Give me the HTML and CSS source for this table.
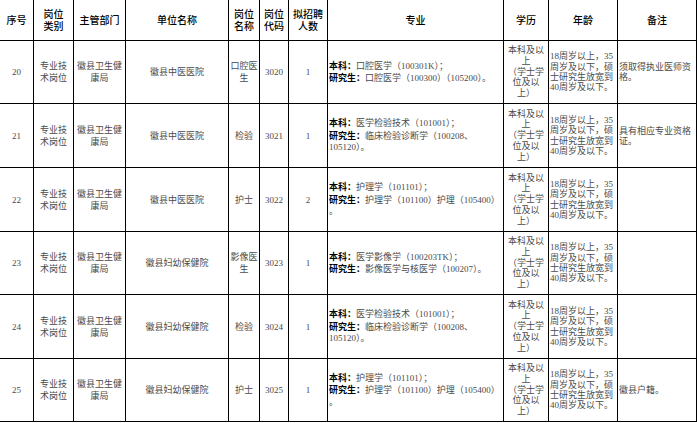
FILE: index.html
```html
<!DOCTYPE html>
<html lang="zh">
<head>
<meta charset="utf-8">
<title>岗位表</title>
<link rel="stylesheet" href="styles.css">
</head>
<body>
<table class="grid">
  <colgroup>
    <col class="w-no"><col class="w-type"><col class="w-dept"><col class="w-unit"><col class="w-post"><col class="w-code"><col class="w-num"><col class="w-major"><col class="w-edu"><col class="w-age"><col class="w-note">
  </colgroup>
  <tr class="head">
    <th>序号</th><th>岗位<br>类别</th><th>主管部门</th><th>单位名称</th><th>岗位<br>名称</th><th>岗位<br>代码</th><th>拟招聘<br>人数</th><th>专业</th><th>学历</th><th>年龄</th><th>备注</th>
  </tr>
  <tr class="row-a">
    <td class="c">20</td><td class="c">专业技<br>术岗位</td><td class="c">徽县卫生健<br>康局</td><td class="c">徽县中医医院</td><td class="c">口腔医<br>生</td><td class="c">3020</td><td class="c">1</td>
    <td class="major"><b>本科：</b>口腔医学（100301K）；<br><b>研究生：</b>口腔医学（100300）（105200）。</td>
    <td class="c edu">本科及以<br>上<br>（学士学<br>位及以<br>上）</td>
    <td class="age">18周岁以上，35<br>周岁及以下，硕<br>士研究生放宽到<br>40周岁及以下。</td>
    <td class="note">须取得执业医师资<br>格。</td>
  </tr>
  <tr class="row-b">
    <td class="c">21</td><td class="c">专业技<br>术岗位</td><td class="c">徽县卫生健<br>康局</td><td class="c">徽县中医医院</td><td class="c">检验</td><td class="c">3021</td><td class="c">1</td>
    <td class="major"><b>本科：</b>医学检验技术（101001）；<br><b>研究生：</b>临床检验诊断学（100208、<br>105120）。</td>
    <td class="c edu">本科及以<br>上<br>（学士学<br>位及以<br>上）</td>
    <td class="age">18周岁以上，35<br>周岁及以下，硕<br>士研究生放宽到<br>40周岁及以下。</td>
    <td class="note">具有相应专业资格<br>证。</td>
  </tr>
  <tr class="row-b">
    <td class="c">22</td><td class="c">专业技<br>术岗位</td><td class="c">徽县卫生健<br>康局</td><td class="c">徽县中医医院</td><td class="c">护士</td><td class="c">3022</td><td class="c">2</td>
    <td class="major"><b>本科：</b>护理学（101101）；<br><b>研究生：</b>护理学（101100）护理（105400）<br>。</td>
    <td class="c edu">本科及以<br>上<br>（学士学<br>位及以<br>上）</td>
    <td class="age">18周岁以上，35<br>周岁及以下，硕<br>士研究生放宽到<br>40周岁及以下。</td>
    <td class="note"></td>
  </tr>
  <tr class="row-a">
    <td class="c">23</td><td class="c">专业技<br>术岗位</td><td class="c">徽县卫生健<br>康局</td><td class="c">徽县妇幼保健院</td><td class="c">影像医<br>生</td><td class="c">3023</td><td class="c">1</td>
    <td class="major"><b>本科：</b>医学影像学（100203TK）；<br><b>研究生：</b>影像医学与核医学（100207）。</td>
    <td class="c edu">本科及以<br>上<br>（学士学<br>位及以<br>上）</td>
    <td class="age">18周岁以上，35<br>周岁及以下，硕<br>士研究生放宽到<br>40周岁及以下。</td>
    <td class="note"></td>
  </tr>
  <tr class="row-b">
    <td class="c">24</td><td class="c">专业技<br>术岗位</td><td class="c">徽县卫生健<br>康局</td><td class="c">徽县妇幼保健院</td><td class="c">检验</td><td class="c">3024</td><td class="c">1</td>
    <td class="major"><b>本科：</b>医学检验技术（101001）；<br><b>研究生：</b>临床检验诊断学（100208、<br>105120）。</td>
    <td class="c edu">本科及以<br>上<br>（学士学<br>位及以<br>上）</td>
    <td class="age">18周岁以上，35<br>周岁及以下，硕<br>士研究生放宽到<br>40周岁及以下。</td>
    <td class="note"></td>
  </tr>
  <tr class="row-a">
    <td class="c">25</td><td class="c">专业技<br>术岗位</td><td class="c">徽县卫生健<br>康局</td><td class="c">徽县妇幼保健院</td><td class="c">护士</td><td class="c">3025</td><td class="c">1</td>
    <td class="major"><b>本科：</b>护理学（101101）；<br><b>研究生：</b>护理学（101100）护理（105400）<br>。</td>
    <td class="c edu">本科及以<br>上<br>（学士学<br>位及以<br>上）</td>
    <td class="age">18周岁以上，35<br>周岁及以下，硕<br>士研究生放宽到<br>40周岁及以下。</td>
    <td class="note">徽县户籍。</td>
  </tr>
</table>
</body>
</html>
```

FILE: styles.css
```css
html, body {
  margin: 0;
  padding: 0;
  background: #fff;
}

.grid {
  border-collapse: separate;
  border-spacing: 0;
  table-layout: fixed;
  width: 697px;
  font-family: "Liberation Serif", "Noto Sans CJK SC", serif;
  font-size: 9px;
  line-height: 11px;
  color: #4a4a4a;
}

.w-no { width: 34px; }
.w-type { width: 40px; }
.w-dept { width: 52px; }
.w-unit { width: 103px; }
.w-post { width: 31px; }
.w-code { width: 29px; }
.w-num { width: 39px; }
.w-major { width: 176px; }
.w-edu { width: 45px; }
.w-age { width: 69px; }
.w-note { width: 79px; }

.grid th,
.grid td {
  border-right: 1px solid #000;
  border-bottom: 1px solid #000;
  padding: 0 1px;
  vertical-align: middle;
  box-sizing: border-box;
  overflow: hidden;
}

.grid th {
  font-family: "Noto Sans CJK SC", sans-serif;
  font-weight: 500;
  font-size: 10px;
  line-height: 12px;
  color: #000;
  text-align: center;
}

.head { height: 41px; }
.row-a { height: 63px; }
.row-b { height: 64px; }

.c {
  text-align: center;
  line-height: 12px;
}

.major {
  text-align: left;
  line-height: 11.5px;
  padding-left: 1px;
  white-space: nowrap;
}

.major b {
  font-family: "Noto Sans CJK SC", sans-serif;
  font-weight: 700;
  color: #000;
}

.grid .edu {
  line-height: 10.8px;
}

.age {
  text-align: left;
  line-height: 10.4px;
  padding-left: 1px;
  white-space: nowrap;
}

.note {
  text-align: left;
  padding-left: 3px;
  line-height: 10px;
  white-space: nowrap;
}
```
